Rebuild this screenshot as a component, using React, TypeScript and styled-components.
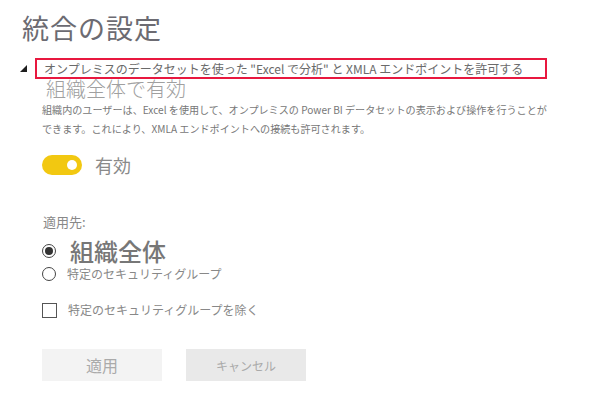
import React from "react";
import styled, { createGlobalStyle } from "styled-components";

const Global = createGlobalStyle`
  html, body { margin: 0; padding: 0; background: #fff; }
  body { font-family: "Noto Sans CJK JP", "Noto Sans", "Liberation Sans", sans-serif; }
`;

const Page = styled.div`
  width: 610px;
  height: 403px;
  padding: 10px 0 0 20px;
  box-sizing: border-box;
  display: flex;
  flex-direction: column;
`;

const Title = styled.h1`
  margin: 0 0 0 2px;
  font-size: 27px;
  line-height: 35px;
  font-weight: 400;
  color: #6c6b72;
  letter-spacing: 1px;
`;

const SectionHeader = styled.div`
  display: flex;
  align-items: center;
  margin-top: 13px;
  height: 20px;
`;

const Caret = styled.div`
  width: 0;
  height: 0;
  border-left: 7px solid transparent;
  border-bottom: 7px solid #1e1e1e;
  margin-right: 8px;
  margin-top: 1px;
`;

const HeaderBox = styled.div`
  width: 512px;
  height: 21px;
  box-sizing: border-box;
  border: 2px solid #e8183f;
  display: flex;
  align-items: center;
  padding-left: 7px;
  font-size: 12px;
  color: #6a6a6a;
  white-space: nowrap;
`;

const Content = styled.div`
  padding-left: 22px;
  display: flex;
  flex-direction: column;
`;

const SubTitle = styled.div`
  margin: 0 0 0 4px;
  font-size: 20px;
  line-height: 22px;
  font-weight: 300;
  color: #a0a0a0;
`;

const Description = styled.p`
  margin: 0;
  font-size: 10.1px;
  line-height: 19px;
  color: #777;
  white-space: nowrap;
`;

const ToggleRow = styled.div`
  display: flex;
  align-items: center;
  height: 22px;
  margin-top: 16px;
  gap: 13px;
`;

const Toggle = styled.div<{ on: boolean }>`
  width: 40px;
  height: 20px;
  border-radius: 10px;
  background: ${(p) => (p.on ? "#f2c811" : "#ccc")};
  display: flex;
  align-items: center;
  justify-content: ${(p) => (p.on ? "flex-end" : "flex-start")};
  padding: 0 5px;
  box-sizing: border-box;
`;

const Knob = styled.div`
  width: 10px;
  height: 10px;
  border-radius: 50%;
  background: #fff;
`;

const ToggleLabel = styled.span`
  font-size: 18px;
  line-height: 22px;
  color: #8a8a8a;
`;

const SectionLabel = styled.div`
  margin: 37px 0 0 1px;
  font-size: 13px;
  line-height: 18px;
  color: #888;
`;

const OptionRow = styled.label<{ large?: boolean }>`
  display: flex;
  align-items: center;
  gap: ${(p) => (p.large ? "14px" : "11px")};
  height: ${(p) => (p.large ? "24px" : "18px")};
  margin-top: ${(p) => (p.large ? "8px" : "2px")};
`;

const Radio = styled.span<{ checked?: boolean }>`
  width: 14px;
  height: 14px;
  border-radius: 50%;
  border: 1px solid #444;
  box-sizing: border-box;
  display: flex;
  align-items: center;
  justify-content: center;
  flex-shrink: 0;
  &::after {
    content: "";
    width: 8px;
    height: 8px;
    border-radius: 50%;
    background: ${(p) => (p.checked ? "#333" : "transparent")};
  }
`;

const OptionText = styled.span<{ large?: boolean }>`
  font-size: ${(p) => (p.large ? "24px" : "12px")};
  font-weight: ${(p) => (p.large ? 500 : 400)};
  color: ${(p) => (p.large ? "#777" : "#888")};
  line-height: ${(p) => (p.large ? "24px" : "18px")};
  white-space: nowrap;
`;

const CheckRow = styled.label`
  display: flex;
  align-items: center;
  gap: 11px;
  margin-top: 18px;
  height: 18px;
`;

const CheckBox = styled.span`
  width: 15px;
  height: 15px;
  border: 1px solid #555;
  box-sizing: border-box;
  flex-shrink: 0;
`;

const ButtonRow = styled.div`
  display: flex;
  gap: 24px;
  margin-top: 30px;
`;

const Button = styled.button<{ variant: "apply" | "cancel" }>`
  width: 120px;
  height: 32px;
  border: none;
  padding: 0;
  font-family: inherit;
  background: ${(p) => (p.variant === "apply" ? "#f3f3f3" : "#e9e9e9")};
  color: #aaa;
  font-size: ${(p) => (p.variant === "apply" ? "16px" : "12px")};
  cursor: default;
`;

export default function App() {
  return (
    <>
      <Global />
      <Page>
        <Title>統合の設定</Title>
        <SectionHeader>
          <Caret />
          <HeaderBox>
            オンプレミスのデータセットを使った "Excel で分析" と XMLA エンドポイントを許可する
          </HeaderBox>
        </SectionHeader>
        <Content>
          <SubTitle>組織全体で有効</SubTitle>
          <Description>
            組織内のユーザーは、Excel を使用して、オンプレミスの Power BI データセットの表示および操作を行うことが
            <br />
            できます。これにより、XMLA エンドポイントへの接続も許可されます。
          </Description>
          <ToggleRow>
            <Toggle on>
              <Knob />
            </Toggle>
            <ToggleLabel>有効</ToggleLabel>
          </ToggleRow>
          <SectionLabel>適用先:</SectionLabel>
          <OptionRow large>
            <Radio checked />
            <OptionText large>組織全体</OptionText>
          </OptionRow>
          <OptionRow>
            <Radio />
            <OptionText>特定のセキュリティグループ</OptionText>
          </OptionRow>
          <CheckRow>
            <CheckBox />
            <OptionText>特定のセキュリティグループを除く</OptionText>
          </CheckRow>
          <ButtonRow>
            <Button variant="apply">適用</Button>
            <Button variant="cancel">キャンセル</Button>
          </ButtonRow>
        </Content>
      </Page>
    </>
  );
}
